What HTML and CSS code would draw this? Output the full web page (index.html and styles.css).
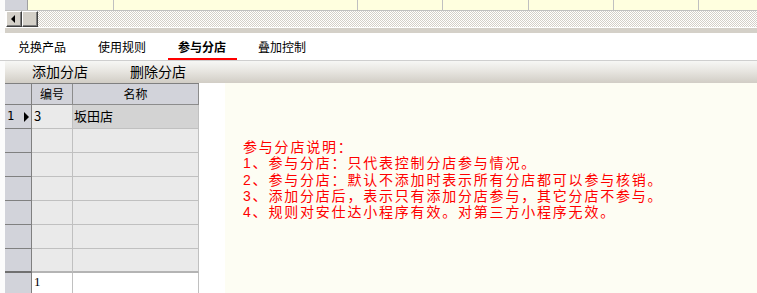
FILE: index.html
```html
<!DOCTYPE html>
<html lang="zh-CN">
<head>
  <meta charset="UTF-8" />
  <title>参与分店</title>
  <link rel="stylesheet" href="styles.css">
</head>
<body>
  <div class="top-grid">
    <div class="tg-head"></div>
    <div class="tg-cell w86"></div>
    <div class="tg-cell w244"></div>
    <div class="tg-cell w85"></div>
    <div class="tg-cell w86"></div>
    <div class="tg-cell w85"></div>
    <div class="tg-cell w85"></div>
    <div class="tg-cell fill"></div>
  </div>

  <div class="hscroll">
    <div class="sb-btn"><span class="arrow-left"></span></div>
    <div class="sb-btn"></div>
    <div class="sb-track"></div>
  </div>

  <div class="sep"></div>

  <div class="tabs">
    <div class="tab">兑换产品</div>
    <div class="tab">使用规则</div>
    <div class="tab active">参与分店</div>
    <div class="tab">叠加控制</div>
  </div>

  <div class="toolbar">
    <span class="tool">添加分店</span>
    <span class="tool">删除分店</span>
  </div>

  <div class="main">
    <div class="grid-box">
      <div class="grid">
        <div class="c rh hd"></div>
        <div class="c hd">编号</div>
        <div class="c hd">名称</div>

        <div class="c rh"><span class="rn">1</span><span class="cur"></span></div>
        <div class="c cell">3</div>
        <div class="c cell sel">坂田店</div>

        <div class="c rh"></div><div class="c cell"></div><div class="c cell"></div>
        <div class="c rh"></div><div class="c cell"></div><div class="c cell"></div>
        <div class="c rh"></div><div class="c cell"></div><div class="c cell"></div>
        <div class="c rh"></div><div class="c cell"></div><div class="c cell"></div>
        <div class="c rh"></div><div class="c cell"></div><div class="c cell"></div>
        <div class="c rh last"></div><div class="c cell last"></div><div class="c cell last"></div>

        <div class="c rh new"></div>
        <div class="c cell new num">1</div>
        <div class="c cell new"></div>
      </div>
    </div>

    <div class="info">
      <p>参与分店说明：</p>
      <p>1、参与分店：只代表控制分店参与情况。</p>
      <p>2、参与分店：默认不添加时表示所有分店都可以参与核销。</p>
      <p>3、添加分店后，表示只有添加分店参与，其它分店不参与。</p>
      <p>4、规则对安仕达小程序有效。对第三方小程序无效。</p>
    </div>
  </div>
</body>
</html>
```

FILE: styles.css
```css
body {
  margin: 0;
  background: #fcfcfc;
  font-family: "Noto Sans CJK SC", "Noto Sans", sans-serif;
  width: 757px;
  height: 293px;
  overflow: hidden;
}
.top-grid {
  display: flex;
  height: 10px;
  margin-left: 5px;
  border-bottom: 1px solid #c0c0c0;
}
.tg-head {
  width: 22px;
  background: #d2d3da;
  border-right: 1px solid #a0a0a0;
}
.tg-cell {
  background: #ffffdf;
  border-right: 1px solid #c0c0c0;
}
.w86 { width: 85px; }
.w244 { width: 243px; }
.w85 { width: 84px; }
.fill { flex: 1; border-right: none; }

.hscroll {
  display: flex;
  height: 16px;
  margin-left: 5px;
  padding: 0 0 1px 1px;
  background: #fff;
}
.sb-btn {
  width: 14px;
  height: 14px;
  background: #d4d0c8;
  border: 1px solid;
  border-color: #fff #404040 #404040 #fff;
  box-shadow: inset -1px -1px 0 #808080;
  display: flex;
  align-items: center;
  justify-content: center;
}
.arrow-left {
  width: 0;
  height: 0;
  border-top: 4px solid transparent;
  border-bottom: 4px solid transparent;
  border-right: 4px solid #000;
  margin-left: -2px;
}
.sb-track {
  flex: 1;
  background: repeating-conic-gradient(#d4d0c8 0 25%, #fff 0 50%) 0 0 / 2px 2px;
}
.sep {
  height: 5px;
  margin-left: 5px;
  background: #d4d0c8;
}

.tabs {
  display: flex;
  height: 27px;
  padding-left: 2px;
  background: #fff;
  border-bottom: 1px solid #cfcfcf;
}
.tab {
  position: relative;
  width: 80px;
  text-align: center;
  font-size: 12px;
  line-height: 27px;
  color: #000;
}
.tab.active {
  font-weight: bold;
}
.tab.active::after {
  content: "";
  position: absolute;
  left: 6px;
  right: 5px;
  bottom: 0;
  height: 2px;
  background: #f00;
}

.toolbar {
  display: flex;
  gap: 42px;
  height: 22px;
  margin-left: 5px;
  padding-left: 27px;
  background: linear-gradient(#f7f7f5, #e8e6e1 45%, #d1cdc5);
  font-size: 14px;
  line-height: 21px;
}

.main {
  display: flex;
  height: 210px;
}
.grid-box {
  width: 220px;
  margin-left: 5px;
  background: #fff;
}
.grid {
  display: grid;
  grid-template-columns: 27px 41px 126px;
  grid-template-rows: 21px repeat(7, 24px) 25px;
  border-top: 1px solid #808080;
  width: 194px;
}
.c {
  box-sizing: border-box;
  border-right: 1px solid #c0c0c0;
  border-bottom: 1px solid #c0c0c0;
  font-size: 13px;
  line-height: 21px;
  white-space: nowrap;
}
.hd {
  background: #d2d3da;
  border-color: #8c8c8c;
  font-size: 12px;
  line-height: 19px;
  text-align: center;
}
.rh {
  background: #d2d3da;
  border-right-color: #808080;
  border-bottom-color: #808080;
  display: flex;
  align-items: center;
  padding-left: 2px;
}
.rn {
  font-family: "DejaVu Sans Mono", monospace;
  font-size: 12px;
  width: 17px;
}
.cur {
  width: 0;
  height: 0;
  border-top: 5px solid transparent;
  border-bottom: 5px solid transparent;
  border-left: 5px solid #000;
}
.cell {
  background: #eaeaea;
  padding-left: 2px;
}
.cell.sel {
  background: #d3d3d3;
  padding-left: 1px;
}
.last {
  border-bottom-width: 2px;
  border-bottom-color: #b4b4b4;
}
.rh.last {
  border-bottom-color: #707070;
}
.new {
  background: #fff;
  border-bottom: none;
}
.rh.new {
  background: #d2d3da;
}
.num {
  font-family: "Liberation Serif", serif;
  font-size: 13px;
  line-height: 17px;
}

.info {
  flex: 1;
  background: #fdfdf3;
  padding: 56px 0 0 18px;
  color: #f00;
  font-family: "Liberation Sans", "Noto Sans CJK SC", sans-serif;
  font-size: 14px;
  letter-spacing: 1.8px;
  line-height: 16.3px;
}
.info p {
  margin: 0;
}
```
